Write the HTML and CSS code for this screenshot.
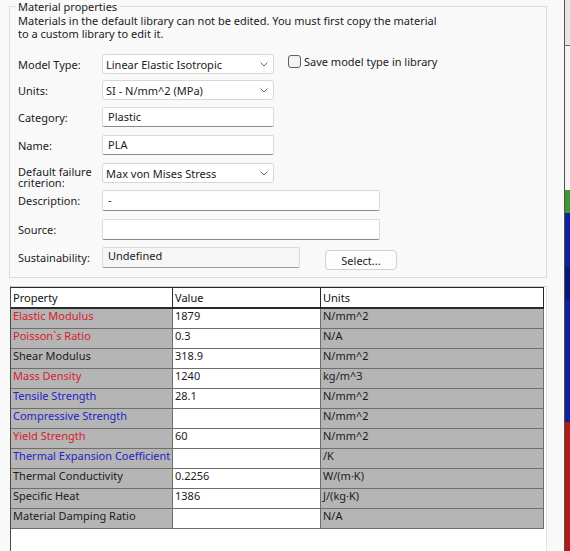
FILE: index.html
```html
<!DOCTYPE html>
<html>
<head>
<meta charset="utf-8">
<link rel="stylesheet" href="styles.css">
</head>
<body>
<div class="app">
  <div class="panel">
    <fieldset class="group">
      <legend class="legend">Material properties</legend>
      <p class="note">Materials in the default library can not be edited. You must first copy the material<br>to a custom library to edit it.</p>
      <div class="form">
        <span class="lbl">Model Type:</span>
        <div class="select"><span>Linear Elastic Isotropic</span><svg class="chev" width="8" height="5" viewBox="0 0 8 5"><path d="M0.5 0.5 L4 4 L7.5 0.5" fill="none" stroke="#6a6a6a" stroke-width="1"/></svg></div>
        <label class="check"><span class="box"></span><span>Save model type in library</span></label>

        <span class="lbl">Units:</span>
        <div class="select"><span>SI - N/mm^2 (MPa)</span><svg class="chev" width="8" height="5" viewBox="0 0 8 5"><path d="M0.5 0.5 L4 4 L7.5 0.5" fill="none" stroke="#6a6a6a" stroke-width="1"/></svg></div>
        <span></span>

        <span class="lbl">Category:</span>
        <div class="input">Plastic</div>
        <span></span>

        <span class="lbl">Name:</span>
        <div class="input">PLA</div>
        <span></span>

        <span class="lbl lbl-top">Default failure<br>criterion:</span>
        <div class="select"><span>Max von Mises Stress</span><svg class="chev" width="8" height="5" viewBox="0 0 8 5"><path d="M0.5 0.5 L4 4 L7.5 0.5" fill="none" stroke="#6a6a6a" stroke-width="1"/></svg></div>
        <span></span>

        <span class="lbl">Description:</span>
        <div class="input wide">-</div>

        <span class="lbl">Source:</span>
        <div class="input wide"></div>

        <span class="lbl">Sustainability:</span>
        <div class="sust-row">
          <div class="readonly">Undefined</div>
          <button class="btn">Select...</button>
        </div>
      </div>
    </fieldset>

    <div class="table-wrap">
      <table class="props">
        <colgroup><col class="c1"><col class="c2"><col class="c3"></colgroup>
        <thead>
          <tr><th>Property</th><th>Value</th><th>Units</th></tr>
        </thead>
        <tbody>
          <tr><td class="red">Elastic Modulus</td><td class="val">1879</td><td>N/mm^2</td></tr>
          <tr><td class="red">Poisson`s Ratio</td><td class="val">0.3</td><td>N/A</td></tr>
          <tr><td>Shear Modulus</td><td class="val">318.9</td><td>N/mm^2</td></tr>
          <tr><td class="red">Mass Density</td><td class="val">1240</td><td>kg/m^3</td></tr>
          <tr><td class="blue">Tensile Strength</td><td class="val">28.1</td><td>N/mm^2</td></tr>
          <tr><td class="blue">Compressive Strength</td><td class="val"></td><td>N/mm^2</td></tr>
          <tr><td class="red">Yield Strength</td><td class="val">60</td><td>N/mm^2</td></tr>
          <tr><td class="blue">Thermal Expansion Coefficient</td><td class="val"></td><td>/K</td></tr>
          <tr><td>Thermal Conductivity</td><td class="val">0.2256</td><td>W/(m·K)</td></tr>
          <tr><td>Specific Heat</td><td class="val">1386</td><td>J/(kg·K)</td></tr>
          <tr><td>Material Damping Ratio</td><td class="val"></td><td>N/A</td></tr>
        </tbody>
      </table>
    </div>
  </div>
  <div class="viewport"></div>
</div>
</body>
</html>
```
FILE: styles.css
```css
html, body {
  margin: 0;
  padding: 0;
}
body {
  background: #f9f9f9;
  font-family: "Noto Sans", "Open Sans", sans-serif;
  font-size: 11px;
  color: #1b1b1b;
}
.app {
  display: flex;
  height: 551px;
  overflow: hidden;
}
.panel {
  width: 564px;
  flex: none;
  box-sizing: border-box;
  padding-left: 9px;
  display: flex;
  flex-direction: column;
}
.group {
  width: 538px;
  box-sizing: border-box;
  margin: 0;
  border: 1px solid #dcdcdc;
  padding: 0 0 7px 8px;
  min-width: 0;
}
.legend {
  margin-left: -2px;
  padding: 0 2px;
  line-height: 13px;
}
.note {
  margin: 1px 0 0;
  line-height: 13px;
}
.form {
  margin-top: 14px;
  display: grid;
  grid-template-columns: 84px 172px auto;
  grid-template-rows: 26px 27px 28px 28px 27px 29px 28px 23px;
}
.lbl {
  height: 20px;
  line-height: 13px;
  display: flex;
  align-items: center;
}
.lbl-top {
  display: block;
  height: auto;
  line-height: 11px;
  padding-top: 3px;
}
.select {
  box-sizing: border-box;
  height: 20px;
  background: #ffffff;
  border: 1px solid #d6d6d6;
  border-radius: 3px;
  padding: 0 5px 0 3px;
  display: flex;
  align-items: center;
  justify-content: space-between;
  line-height: 13px;
}
.chev {
  display: block;
}
.input {
  box-sizing: border-box;
  height: 20px;
  background: #ffffff;
  border: 1px solid #dadada;
  border-bottom-color: #8a8a8a;
  border-radius: 2px;
  padding: 0 5px;
  line-height: 17px;
}
.input.wide {
  width: 278px;
  height: 21px;
  line-height: 18px;
  grid-column: 2 / 4;
}
.check {
  margin-left: 14px;
  display: flex;
  align-items: flex-start;
  gap: 3px;
  padding-top: 1px;
  line-height: 13px;
}
.box {
  width: 13px;
  height: 13px;
  box-sizing: border-box;
  border: 1px solid #5e5e5e;
  border-radius: 3px;
  background: #f4f4f4;
}
.sust-row {
  grid-column: 2 / 4;
  display: flex;
  align-items: flex-start;
  gap: 25px;
}
.readonly {
  box-sizing: border-box;
  width: 198px;
  height: 21px;
  border: 1px solid #dadada;
  border-bottom-color: #9a9a9a;
  border-radius: 2px;
  background: #f6f6f6;
  padding: 1px 5px 0;
  line-height: 13px;
}
.btn {
  margin-top: 3px;
  box-sizing: border-box;
  width: 72px;
  height: 20px;
  border: 1px solid #d0d0d0;
  border-radius: 4px;
  background: #fdfdfd;
  font: inherit;
  color: #1b1b1b;
  line-height: 13px;
  padding: 0;
}
.table-wrap {
  flex: 1;
  margin-top: 8px;
  margin-left: 1px;
  width: 537px;
  box-sizing: border-box;
  background: #ffffff;
  border-top: 1px solid #cfcfcf;
  border-left: 1px solid #4a4a4a;
  border-right: 1px solid #e2e2e2;
}
.props {
  table-layout: fixed;
  border-collapse: separate;
  border-spacing: 0;
  width: 533px;
  border-top: 1px solid #2a2a2a;
}
.c1 { width: 162px; }
.c2 { width: 148px; }
.c3 { width: 223px; }
.props th,
.props td {
  box-sizing: border-box;
  padding: 0 2px;
  text-align: left;
  vertical-align: top;
  font-weight: normal;
  line-height: 13px;
  white-space: nowrap;
  overflow: hidden;
  border-right: 1px solid #6e6e6e;
  border-bottom: 1px solid #6e6e6e;
  background: #b5b5b5;
  color: #1b1b1b;
  height: 20px;
}
.props th {
  padding-top: 3px;
  background: #ffffff;
  color: #111111;
  border-right-color: #2a2a2a;
  border-bottom: 2px solid #2a2a2a;
  height: 21px;
}
.props td.val {
  background: #ffffff;
}
.props td.red { color: #d8202a; }
.props td.blue { color: #2424c4; }
.viewport {
  flex: 1;
  border-left: 1px solid #55553f;
  background: linear-gradient(to bottom,
    #e6e6e6 0px, #e6e6e6 45px,
    #6a6a6a 45px, #6a6a6a 46px,
    #f4f4f4 46px, #f4f4f4 190px,
    #3a9a35 190px, #3a9a35 213px,
    #1020a0 213px, #1020a0 267px,
    #0a1680 267px, #0a1680 300px,
    #1020a0 300px, #1020a0 422px,
    #b01a1a 422px, #b01a1a 551px);
}
```
